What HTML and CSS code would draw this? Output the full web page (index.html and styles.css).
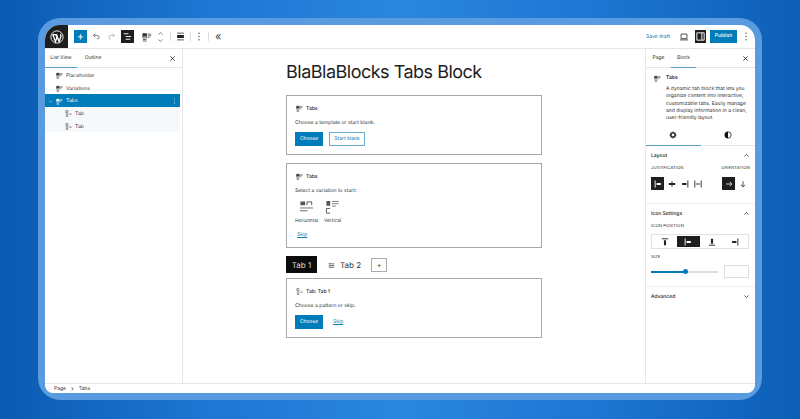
FILE: index.html
```html
<!DOCTYPE html>
<html lang="en">
<head>
<meta charset="utf-8">
<title>Tabs</title>
<link rel="stylesheet" href="styles.css">
</head>
<body>
<svg class="defs" width="0" height="0">
  <defs>
    <symbol id="tabs" viewBox="0 0 12 12"><path d="M1 2h4.500v5H1zM1 9h4.500M1 10.800h4.500" fill="none" stroke="currentColor" stroke-width=".9"/><path d="M1 2h4.500v3.500H1z" fill="currentColor"/><path d="M7 2.500h4M7 4.500h4M7 6.500h2" stroke="currentColor" stroke-width=".9"/></symbol>
    <symbol id="tab" viewBox="0 0 12 12"><path d="M1.500 1h3.500v4H1.500zM1.500 7h4M1.500 9h4M1.500 11h4" fill="none" stroke="currentColor" stroke-width=".9"/><path d="M7 7h4.500" stroke="currentColor" stroke-width="1"/></symbol>
    <symbol id="just-left" viewBox="0 0 14 14"><path d="M3 2v10" stroke="currentColor" stroke-width="1.300"/><path d="M5 5.500h6v3H5z" fill="currentColor"/></symbol>
    <symbol id="just-right" viewBox="0 0 14 14"><path d="M11 2v10" stroke="currentColor" stroke-width="1.300"/><path d="M3 5.500h6v3H3z" fill="currentColor"/></symbol>
    <symbol id="just-center" viewBox="0 0 14 14"><path d="M7 3v8" stroke="currentColor" stroke-width="1.200"/><path d="M2.500 5.500h9v3h-9z" fill="currentColor"/></symbol>
    <symbol id="just-between" viewBox="0 0 14 14"><path d="M2.500 2v10M11.500 2v10M4 7h6" stroke="currentColor" stroke-width="1.200"/></symbol>
    <symbol id="chev-up" viewBox="0 0 10 10"><path d="M2 6.500 5 3.500l3 3" fill="none" stroke="currentColor" stroke-width="1"/></symbol>
    <symbol id="chev-down" viewBox="0 0 10 10"><path d="M2 3.500 5 6.500l3-3" fill="none" stroke="currentColor" stroke-width="1"/></symbol>
    <symbol id="close" viewBox="0 0 10 10"><path d="M2 2l6 6M8 2 2 8" stroke="currentColor" stroke-width="1.200"/></symbol>
    <symbol id="dots" viewBox="0 0 4 12"><circle cx="2" cy="2.500" r=".8" fill="currentColor"/><circle cx="2" cy="6" r=".8" fill="currentColor"/><circle cx="2" cy="9.500" r=".8" fill="currentColor"/></symbol>
  </defs>
</svg>
<div class="frame">
  <div class="editor">
    <header class="topbar">
      <div class="logo">
        <svg class="logo-mark" viewBox="0 0 16 16"><circle cx="8" cy="8" r="7" fill="none" stroke="#fff" stroke-width="1"/><path d="M3.300 5.300 6.200 13.300 8 8.600 6.700 5.300M2.700 5.200h5M7.400 5.200l3 8.100 2-5.700c.5-1.400-.1-2.300-.8-2.600" fill="none" stroke="#fff" stroke-width="1.500"/></svg>
      </div>
      <div class="tools">
        <span class="add">+</span>
        <svg class="tool-ic muted" viewBox="0 0 12 12"><path d="M2 4.500h5a2.500 2.500 0 0 1 0 5M4.500 2 2 4.500 4.500 7" fill="none" stroke="currentColor" stroke-width="1"/></svg>
        <svg class="tool-ic faint" viewBox="0 0 12 12"><path d="M10 4.500H5a2.500 2.500 0 0 0 0 5M7.500 2 10 4.500 7.500 7" fill="none" stroke="currentColor" stroke-width="1"/></svg>
        <span class="tool-dark"><svg viewBox="0 0 12 12"><path d="M2 3h5M4 6h6M4 9h5" stroke="#fff" stroke-width="1"/></svg></span>
        <svg class="tool-ic tabs-ic"><use href="#tabs"/></svg>
        <span class="mover"><svg><use href="#chev-up"/></svg><svg><use href="#chev-down"/></svg></span>
        <i class="sep"></i>
        <svg class="tool-ic align" viewBox="0 0 12 12"><path d="M1.500 1.500h9M1.500 10.500h9" stroke="currentColor" stroke-width="1"/><path d="M1.500 4h9v4h-9z" fill="currentColor"/></svg>
        <i class="sep"></i>
        <svg class="tool-dots"><use href="#dots"/></svg>
        <i class="sep sep-wide"></i>
        <span class="collapse">«</span>
      </div>
      <div class="actions">
        <span class="save">Save draft</span>
        <svg class="view" viewBox="0 0 12 12"><path d="M2.500 2.500h7v5.500h-7zM1 9.500h10" fill="none" stroke="currentColor" stroke-width="1"/></svg>
        <span class="panel-toggle"><svg viewBox="0 0 12 12"><path d="M2 2h8v8H2zM7.500 2v8" fill="none" stroke="#fff" stroke-width="1"/></svg></span>
        <span class="publish">Publish</span>
        <svg class="tool-dots"><use href="#dots"/></svg>
      </div>
    </header>
    <div class="workspace">
      <aside class="listview">
        <div class="tabs-head">
          <span class="lv-tab active">List View</span>
          <span class="lv-tab">Outline</span>
          <svg class="close"><use href="#close"/></svg>
        </div>
        <ul class="tree">
          <li class="row"><svg class="ic"><use href="#tabs"/></svg>Placeholder</li>
          <li class="row"><svg class="ic"><use href="#tabs"/></svg>Variations</li>
          <li class="row selected"><svg class="caret"><use href="#chev-down"/></svg><svg class="ic"><use href="#tabs"/></svg><span class="grow">Tabs</span><svg class="row-dots"><use href="#dots"/></svg></li>
          <li class="row child"><svg class="ic"><use href="#tab"/></svg>Tab</li>
          <li class="row child"><svg class="ic"><use href="#tab"/></svg>Tab</li>
        </ul>
      </aside>
      <main class="canvas">
        <div class="content">
          <h1 class="title">BlaBlaBlocks Tabs Block</h1>
          <section class="ph ph-a">
            <div class="ph-label"><svg class="ic"><use href="#tabs"/></svg>Tabs</div>
            <p class="ph-text">Choose a template or start blank.</p>
            <div class="ph-btns"><span class="btn primary">Choose</span><span class="btn outline">Start blank</span></div>
          </section>
          <section class="ph ph-b">
            <div class="ph-label"><svg class="ic"><use href="#tabs"/></svg>Tabs</div>
            <p class="ph-text">Select a variation to start:</p>
            <div class="variations">
              <div class="variation">
                <svg viewBox="0 0 16 16"><path d="M1.500 1.500h5v4h-5z" fill="#555"/><path d="M8.500 5.500V2h5v3.500" fill="none" stroke="#555"/><path d="M1 8.500h14M1 11.500h8" stroke="#666"/></svg>
                <span>Horizontal</span>
              </div>
              <div class="variation">
                <svg viewBox="0 0 16 16"><path d="M1.500 1h4v5h-4z" fill="#555"/><path d="M7.500 1.500h7M7.500 4h7M7.500 6.500h4" stroke="#777"/><path d="M5.500 9h-4v5h4" fill="none" stroke="#555"/></svg>
                <span>Vertical</span>
              </div>
            </div>
            <a class="skip skip-b">Skip</a>
          </section>
          <nav class="tabbar">
            <span class="tb-tab on">Tab 1</span>
            <span class="tb-tab tb-two"><svg class="sliders" viewBox="0 0 12 12"><path d="M1 3h10M1 6h10M1 9h10" stroke="#333" stroke-width="1"/><path d="M3.500 1.500v3M8.500 4.500v3M4.500 7.500v3" stroke="#333" stroke-width="1"/></svg>Tab 2</span>
            <span class="tb-add">+</span>
          </nav>
          <section class="ph ph-c">
            <div class="ph-label"><svg class="ic"><use href="#tab"/></svg>Tab: Tab 1</div>
            <p class="ph-text">Choose a pattern or skip.</p>
            <div class="ph-btns"><span class="btn primary">Choose</span><a class="skip">Skip</a></div>
          </section>
        </div>
      </main>
      <aside class="inspector">
        <div class="tabs-head ins-head">
          <span class="lv-tab">Page</span>
          <span class="lv-tab active">Block</span>
          <svg class="close"><use href="#close"/></svg>
        </div>
        <div class="card">
          <svg class="ic"><use href="#tabs"/></svg>
          <div>
            <div class="card-title">Tabs</div>
            <p class="card-desc">A dynamic tab block that lets you organize content into interactive, customizable tabs. Easily manage and display information in a clean, user-friendly layout.</p>
          </div>
        </div>
        <div class="sub-tabs">
          <span class="sub-tab active"><svg viewBox="0 0 12 12"><circle cx="6" cy="6" r="3.200" fill="none" stroke="#111" stroke-width="2"/><path d="M6 .8v2M6 9.200v2M.8 6h2M9.200 6h2M2.300 2.300l1.400 1.400M8.300 8.300l1.400 1.400M9.700 2.300 8.300 3.700M3.700 8.300 2.300 9.700" stroke="#111" stroke-width="1.400"/></svg></span>
          <span class="sub-tab"><svg viewBox="0 0 12 12"><circle cx="6" cy="6" r="4.800" fill="none" stroke="#111" stroke-width="1.100"/><path d="M6 1.200a4.800 4.800 0 0 0 0 9.600z" fill="#111"/></svg></span>
        </div>
        <section class="panel layout">
          <div class="panel-head"><span>Layout</span><svg><use href="#chev-up"/></svg></div>
          <div class="layout-row">
            <div>
              <div class="cap">JUSTIFICATION</div>
              <div class="icons">
                <span class="ib on"><svg><use href="#just-left"/></svg></span>
                <span class="ib"><svg><use href="#just-center"/></svg></span>
                <span class="ib"><svg><use href="#just-right"/></svg></span>
                <span class="ib"><svg><use href="#just-between"/></svg></span>
              </div>
            </div>
            <div>
              <div class="cap">ORIENTATION</div>
              <div class="icons orient">
                <span class="ib on"><svg viewBox="0 0 14 14"><path d="M3 7h8M8 4l3 3-3 3" fill="none" stroke="currentColor" stroke-width="1.100"/></svg></span>
                <span class="ib"><svg viewBox="0 0 14 14"><path d="M7 3v8M4 8l3 3 3-3" fill="none" stroke="currentColor" stroke-width="1.100"/></svg></span>
              </div>
            </div>
          </div>
        </section>
        <section class="panel icons-panel">
          <div class="panel-head"><span>Icon Settings</span><svg><use href="#chev-up"/></svg></div>
          <div class="cap cap-pos">ICON POSITION</div>
          <div class="segment">
            <span class="seg"><svg viewBox="0 0 14 14"><path d="M2.500 2.500h9" stroke="currentColor" stroke-width="1.300"/><path d="M5.500 4.500h3v7h-3z" fill="currentColor"/></svg></span>
            <span class="seg on"><svg><use href="#just-left"/></svg></span>
            <span class="seg"><svg viewBox="0 0 14 14"><path d="M2.500 11.500h9" stroke="currentColor" stroke-width="1.300"/><path d="M5.500 2.500h3v7h-3z" fill="currentColor"/></svg></span>
            <span class="seg"><svg><use href="#just-right"/></svg></span>
          </div>
          <div class="cap size-cap">SIZE</div>
          <div class="size-row">
            <div class="slider"><span class="slider-fill"></span><span class="slider-thumb"></span></div>
            <span class="size-input"></span>
          </div>
        </section>
        <section class="panel advanced">
          <div class="panel-head"><span>Advanced</span><svg><use href="#chev-down"/></svg></div>
        </section>
      </aside>
    </div>
    <footer class="crumbs"><span>Page</span><span class="gt">›</span><span>Tabs</span></footer>
  </div>
</div>
</body>
</html>
```
FILE: styles.css
```css
* { box-sizing: border-box; }
html, body { margin: 0; height: 100%; }
body {
  width: 800px;
  height: 419px;
  overflow: hidden;
  background: linear-gradient(90deg, #0b5ab2 0%, #1d76d2 25%, #2a86e0 50%, #1d76d2 75%, #0d5eb6 100%);
  font-family: Inter, "Liberation Sans", sans-serif;
  color: #1e1e1e;
  padding: 18px 38px 19px;
  text-rendering: geometricPrecision;
}
.defs { position: absolute; }
.frame {
  height: 382px;
  padding: 7px;
  border-radius: 22px;
  background: #5a9be0;
}
.editor {
  height: 368px;
  background: #fff;
  border-radius: 15px 15px 8px 8px;
  overflow: hidden;
  display: flex;
  flex-direction: column;
}
.topbar {
  height: 24px;
  flex: none;
  display: flex;
  align-items: center;
  border-bottom: 1px solid #e6e6e6;
}
.logo {
  width: 23px;
  height: 23px;
  background: #1e1e1e;
  display: flex;
  align-items: center;
  justify-content: center;
}
.logo-mark { width: 14px; height: 14px; }
.tools { display: flex; align-items: center; padding-left: 6px; flex: 1; }
.add {
  width: 13px; height: 13px;
  background: #007cba;
  color: #fff;
  font-size: 11px;
  line-height: 13px;
  text-align: center;
}
.tool-ic { width: 9px; height: 9px; margin-left: 5px; color: #333; }
.tool-ic.muted { color: #555; }
.tool-ic.faint { color: #aaa; margin-left: 6px; }
.tool-ic.tabs-ic { width: 10px; height: 10px; margin-left: 8px; }
.tool-ic.align { margin-left: 5px; color: #222; }
.tool-dark {
  width: 13px; height: 13px;
  margin-left: 5px;
  background: #1e1e1e;
  padding: 1px;
  display: flex;
}
.mover { display: flex; flex-direction: column; margin-left: 4px; width: 9px; color: #555; }
.mover svg { width: 9px; height: 7px; }
.sep { width: 1px; height: 9px; background: #ddd; margin-left: 5px; }
.sep-wide { margin-left: 7px; }
.tool-dots { width: 4px; height: 11px; margin-left: 6px; color: #555; }
.collapse { font-size: 11px; margin-left: 6px; color: #444; line-height: 11px; }
.actions { display: flex; align-items: center; padding-right: 7px; }
.save { font-size: 5px; color: #007cba; margin-right: 9px; }
.view { width: 10px; height: 10px; color: #333; margin-right: 6px; }
.panel-toggle {
  width: 11px; height: 13px;
  background: #1e1e1e;
  padding: 1px 0;
  display: flex;
  margin-right: 4px;
}
.publish {
  width: 27px; height: 13px;
  background: #007cba;
  color: #fff;
  font-size: 5px;
  font-weight: 500;
  line-height: 13px;
  text-align: center;
}
.actions .tool-dots { margin-left: 7px; }
.workspace { flex: 1; display: flex; min-height: 0; }
.listview { width: 138px; flex: none; border-right: 1px solid #e6e6e6; }
.tabs-head {
  height: 19px;
  display: flex;
  align-items: center;
  border-bottom: 1px solid #e6e6e6;
  font-size: 5px;
  color: #333;
}
.lv-tab { width: 32px; height: 19px; line-height: 19px; text-align: center; }
.ins-head .lv-tab { width: 25px; }
.lv-tab.active { border-bottom: 1px solid #5a9fc8; }
.close { width: 7px; height: 7px; margin-left: auto; margin-right: 6px; color: #222; }
.tree { list-style: none; margin: 1px 0 0; padding: 0 2px 0 0; }
.row {
  height: 12.700px;
  display: flex;
  align-items: center;
  font-size: 5.100px;
  padding-left: 11px;
  padding-top: 1px;
  color: #333;
}
.ic { width: 7px; height: 7px; flex: none; margin-right: 3px; color: #333; }
.row.selected { background: #007cba; color: #fff; padding-left: 3px; }
.row.selected .ic { color: #fff; margin-right: 3px; }
.caret { width: 5px; height: 5px; margin-right: 3px; color: #fff; }
.grow { flex: 1; }
.row-dots { width: 3px; height: 8px; margin-right: 4px; color: #cfe4f2; }
.row.child { background: #f6f9fc; padding-left: 20px; }
.canvas { flex: 1; display: flex; min-width: 0; }
.content { width: 256px; margin-left: 103px; padding-top: 13px; }
.title {
  font-size: 18px;
  font-weight: 400;
  line-height: 22px;
  margin: 0 0 11px;
  color: #1e1e1e;
  letter-spacing: -.5px;
  white-space: nowrap;
}
.ph {
  border: 1px solid #a8a8a8;
  padding: 9px 8px;
  margin-bottom: 8px;
  width: 256px;
}
.ph-a { height: 60px; }
.ph-b { height: 85px; }
.ph-c { height: 60px; margin-bottom: 0; }
.ph-label { display: flex; align-items: center; font-size: 5px; font-weight: 500; height: 7px; padding-left: 1px; }
.ph-label .ic { margin-right: 3px; }
.ph-text { font-size: 5.100px; margin: 8px 0 0; line-height: 7px; color: #333; }
.ph-btns { display: flex; align-items: center; margin-top: 5px; }
.btn { height: 14px; font-size: 5px; line-height: 14px; text-align: center; }
.btn.primary { width: 28px; background: #007cba; color: #fff; }
.btn.outline { width: 36px; margin-left: 6px; border: 1px solid #6aaccf; line-height: 12px; color: #007cba; }
.skip { font-size: 5px; color: #007cba; text-decoration: underline; margin-left: 10px; }
.skip-b { display: block; margin: 8px 0 0 2px; }
.variations { display: flex; gap: 6px; margin-top: 5px; }
.variation { display: flex; flex-direction: column; align-items: center; font-size: 4.800px; color: #333; width: 23px; }
.variation + .variation { width: 17px; }
.variation svg { width: 15px; height: 15px; margin-bottom: 3px; }
.tabbar { display: flex; align-items: center; height: 17px; margin-bottom: 5px; }
.tb-tab {
  height: 17px;
  padding-top: 1px;
  font-size: 8px;
  line-height: 17px;
  display: flex;
  align-items: center;
  color: #333;
}
.tb-tab.on { width: 31px; background: #0c0c0c; color: #ddd; justify-content: center; }
.tb-two { padding-left: 11px; }
.sliders { width: 7px; height: 7px; margin-right: 5px; }
.tb-add {
  width: 16px; height: 14px;
  margin-left: 10px;
  border: 1px solid #aaa;
  font-size: 8px;
  line-height: 12px;
  text-align: center;
  color: #555;
}
.inspector { width: 110px; flex: none; border-left: 1px solid #e6e6e6; font-size: 5px; }
.card { display: flex; padding: 6px 5px 0 8px; height: 56px; }
.card .ic { margin-right: 5px; margin-top: 1px; }
.card-title { font-weight: 600; line-height: 8px; }
.card-desc { margin: 4px 0 0; line-height: 7.300px; color: #333; }
.sub-tabs { display: flex; height: 22px; border-bottom: 1px solid #e6e6e6; }
.sub-tab { flex: 1; display: flex; align-items: center; justify-content: center; height: 22px; }
.sub-tab svg { width: 8px; height: 8px; }
.sub-tab.active { border-bottom: 1px solid #5a9fc8; }
.panel { border-bottom: 1px solid #eee; padding: 0 5px; }
.panel-head {
  height: 18px;
  padding-top: 1px;
  display: flex;
  align-items: center;
  justify-content: space-between;
  font-size: 5px;
  font-weight: 500;
}
.panel-head svg { width: 7px; height: 7px; }
.layout { height: 58px; }
.layout-row { display: flex; justify-content: space-between; margin-top: 2px; }
.cap { font-size: 4.200px; line-height: 6px; letter-spacing: .1px; color: #333; }
.cap-pos { margin-top: 2px; }
.icons { display: flex; margin-top: 5px; }
.ib { width: 11px; height: 13px; display: flex; align-items: center; justify-content: center; color: #222; }
.ib svg { width: 10px; height: 10px; }
.ib.on { width: 13px; background: #1e1e1e; color: #fff; }
.ib + .ib { margin-left: 2px; }
.orient { margin-left: 1px; }
.orient .ib + .ib { margin-left: 2px; }
.icons-panel { height: 83px; }
.segment {
  display: flex;
  height: 15px;
  margin-top: 4px;
  border: 1px solid #e2e2e2;
  padding: 1px;
  width: 98px;
}
.seg { flex: 1; display: flex; align-items: center; justify-content: center; color: #222; }
.seg svg { width: 10px; height: 10px; }
.seg.on { background: #1e1e1e; color: #fff; }
.size-cap { margin-top: 6px; }
.size-row { display: flex; align-items: center; justify-content: space-between; margin-top: 4px; width: 98px; }
.slider { width: 67px; height: 2px; background: #ddd; position: relative; }
.slider-fill { display: block; width: 34px; height: 2px; background: #007cba; }
.slider-thumb {
  position: absolute;
  left: 31.500px; top: -1.500px;
  width: 5px; height: 5px;
  border-radius: 50%;
  background: #007cba;
}
.size-input { width: 25px; height: 13px; border: 1px solid #ddd; }
.advanced { border-bottom: 0; height: 20px; }
.crumbs {
  height: 10px;
  flex: none;
  border-top: 1px solid #e6e6e6;
  display: flex;
  align-items: center;
  gap: 5px;
  padding-left: 9px;
  font-size: 5px;
  color: #333;
}
.gt { font-size: 7px; line-height: 8px; }
```
